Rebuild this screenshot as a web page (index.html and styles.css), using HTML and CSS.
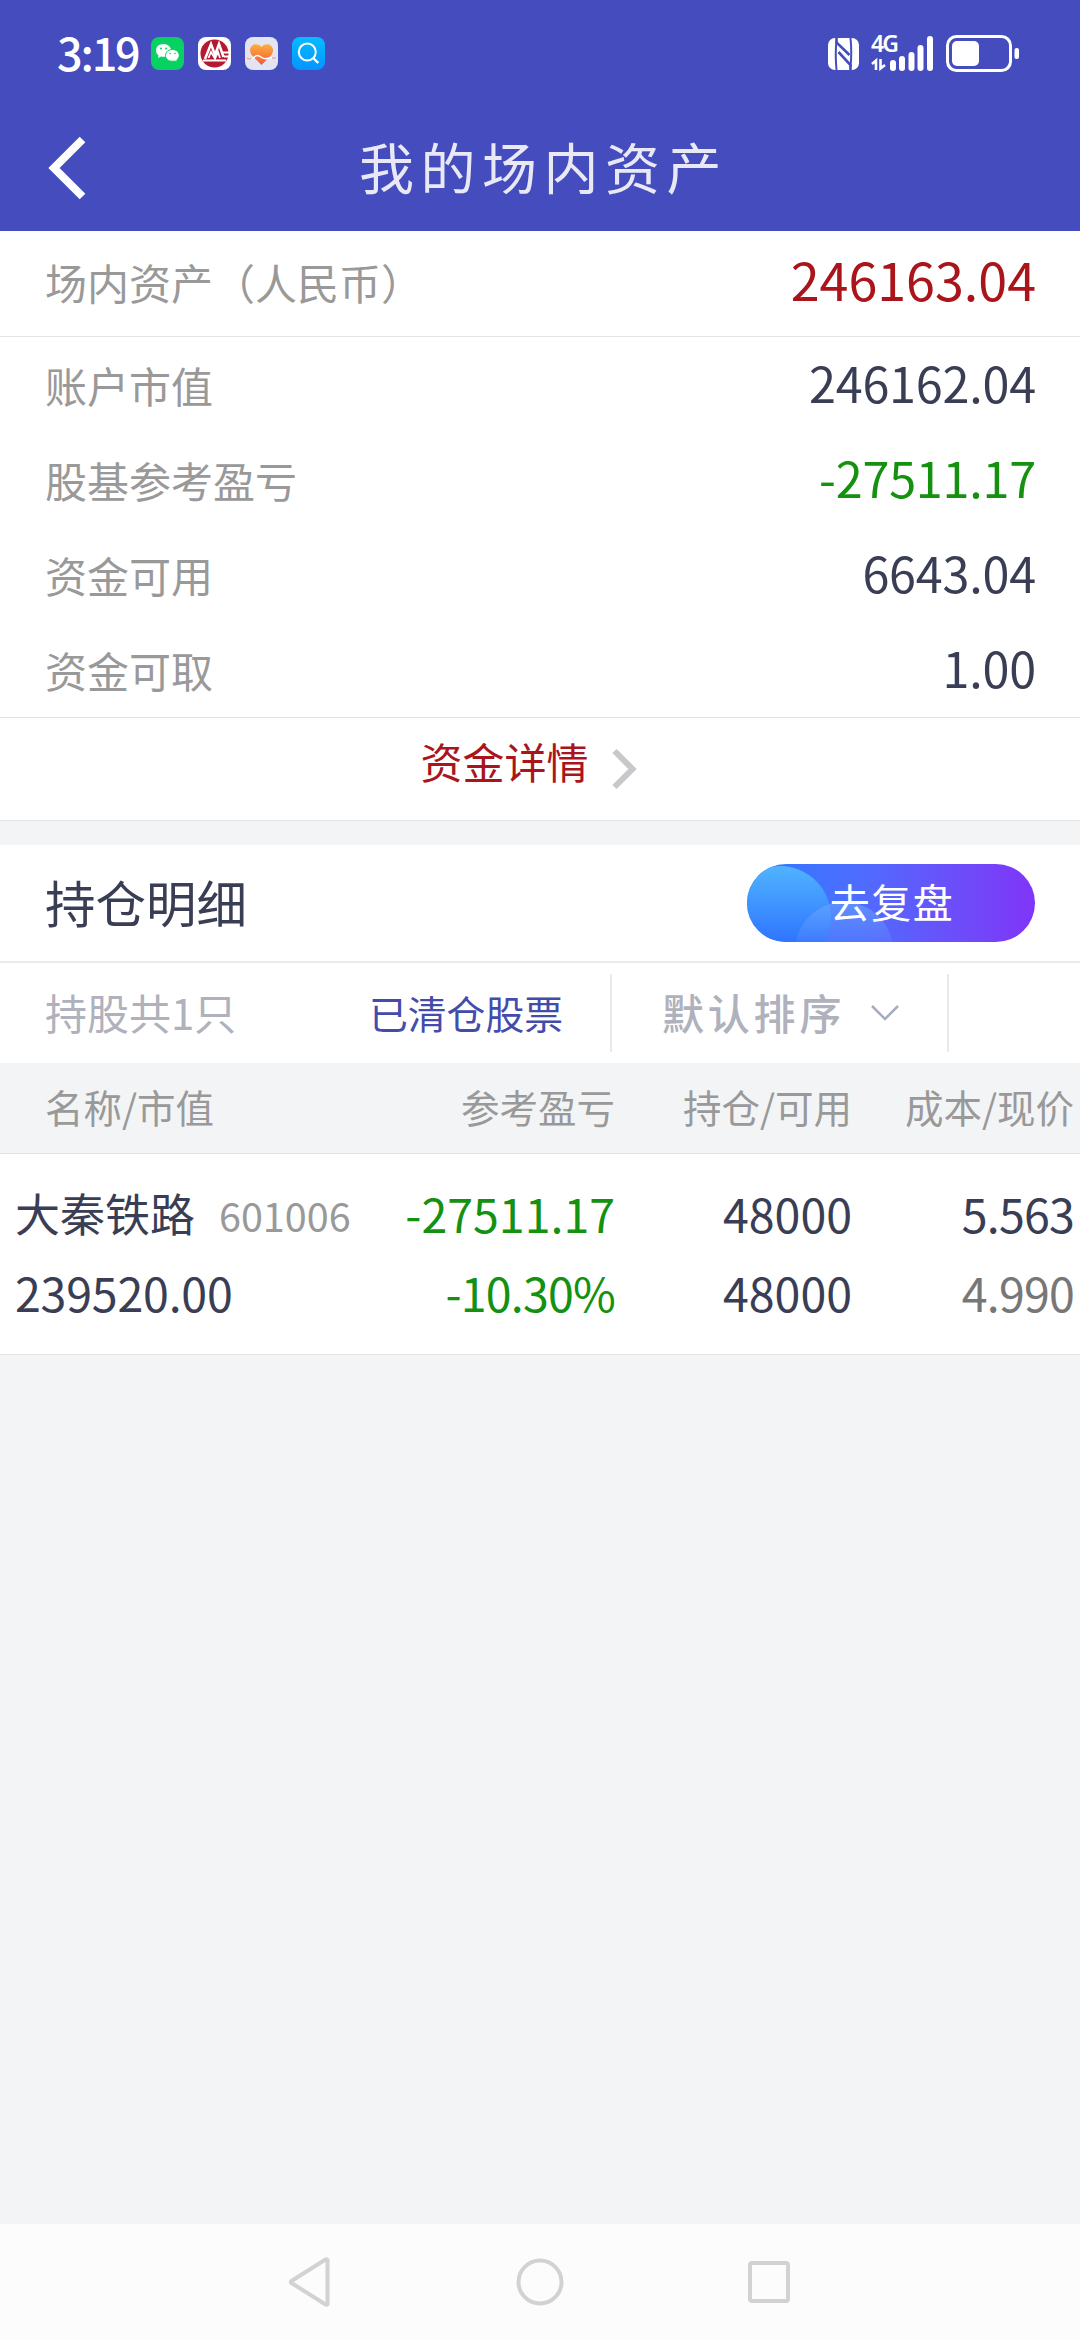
FILE: index.html
```html
<!DOCTYPE html>
<html lang="zh-CN">
<head>
    <meta charset="UTF-8">
    <meta name="viewport" content="width=device-width, initial-scale=1.0">
    <title>我的场内资产</title>
    <link rel="stylesheet" href="styles.css">
</head>
<body>
    <header>
        <!-- Status bar -->
        <div class="status-bar">
            <span class="time">3:19</span>
            <div class="apps">
                <svg width="33" height="33" viewBox="0 0 33 33">
                    <rect width="33" height="33" rx="8" fill="#07d160"/>
                    <path d="M12.500 7C8 7 5 9.800 5 13.500c0 2 1 3.700 2.600 4.900L7 21l3-1.500c.8.2 1.600.3 2.500.3C17 19.800 20 17 20 13.500S17 7 12.500 7z" fill="#fff"/>
                    <path d="M21.500 12.500c-4 0-7 2.600-7 5.900s3 5.900 7 5.900c.8 0 1.500-.1 2.200-.3l2.600 1.300-.6-2.300c1.500-1.100 2.500-2.700 2.500-4.600 0-3.300-2.900-5.900-6.700-5.900z" fill="#fff" stroke="#07d160"/>
                    <g fill="#07d160"><circle cx="10" cy="11.500" r="1"/><circle cx="15" cy="11.500" r="1"/><circle cx="19" cy="16.500" r=".8"/><circle cx="24" cy="16.500" r=".8"/></g>
                </svg>
                <svg width="33" height="33" viewBox="0 0 33 33">
                    <rect width="33" height="33" rx="8" fill="#fff"/>
                    <circle cx="16.500" cy="16.500" r="14" fill="#b5182f"/>
                    <path d="M7 22L13 7l4 11 4-11 4.500 13" fill="none" stroke="#fff" stroke-width="2.500"/>
                    <path d="M10.500 21l2.500-6 4 6.500 3-6.500 2 6M5 23.500h23M25 15.500h8M26 19.500h7" fill="none" stroke="#fff" stroke-width="1.800"/>
                </svg>
                <svg width="33" height="33" viewBox="0 0 33 33">
                    <defs>
                        <linearGradient id="heart" x1="0" y1="0" x2="0" y2="1">
                            <stop offset="0" stop-color="#fbb03c"/>
                            <stop offset="1" stop-color="#f8573c"/>
                        </linearGradient>
                    </defs>
                    <rect width="33" height="33" rx="8" fill="#e2e4f2"/>
                    <path d="M16.500 28L7.500 19C4 15 4.500 11 7 8.700c3-2.500 7-1.700 9.500 1.300 2.500-3 6.500-3.800 9.500-1.300 2.500 2.300 3 6.300-.5 10.300z" fill="url(#heart)"/>
                    <path d="M2 21c4 3 6 0 8-1.500s3-1.500 5 0 4 3 7 2 5-1 9-.5" fill="none" stroke="#fff" stroke-width="1.500"/>
                    <path d="M2 21c1.500 1.200 3 1.300 4.500.3M27 21l4 .1" fill="none" stroke="#f8a07c" stroke-width="1.500"/>
                </svg>
                <svg width="33" height="33" viewBox="0 0 33 33">
                    <defs>
                        <linearGradient id="find" x1="0" y1="0" x2="0" y2="1">
                            <stop offset="0" stop-color="#06bcff"/>
                            <stop offset="1" stop-color="#0594ff"/>
                        </linearGradient>
                    </defs>
                    <rect width="33" height="33" rx="8" fill="url(#find)"/>
                    <circle cx="15.300" cy="15" r="8.500" fill="none" stroke="#fff" stroke-width="2"/>
                    <path d="M21.300 21l5 5" stroke="#fff" stroke-width="2.400"/>
                </svg>
            </div>
            <div class="system">
                <svg width="31" height="32" viewBox="0 0 31 32">
                    <rect width="31" height="32" rx="7" fill="#fff"/>
                    <path d="M8.500 0v4.500L21.500 17M22.500 32v-5L10.500 14" fill="none" stroke="#444cbe" stroke-width="2.600"/>
                    <path d="M8.500 3q-1.500 12 0 29M22.500 0q1.500 14 0 29" fill="none" stroke="#444cbe" stroke-width="2"/>
                </svg>
                <div class="signal">
                    <span class="net">4G</span>
                    <svg width="63" height="35" viewBox="0 0 63 35">
                        <g fill="#fff">
                            <rect x="19" y="24" width="6" height="11" rx="3"/>
                            <rect x="28" y="20" width="6" height="15" rx="3"/>
                            <rect x="37.500" y="16" width="6" height="19" rx="3"/>
                            <rect x="46.500" y="9" width="6" height="26" rx="3"/>
                            <rect x="56" y="0" width="6" height="35" rx="3"/>
                        </g>
                        <path d="M1 28l4-3.500V34M9.500 23v9.500l4.500-3.500" fill="none" stroke="#fff" stroke-width="2.600"/>
                    </svg>
                </div>
                <svg width="74" height="38" viewBox="0 0 74 38">
                    <rect x="1.500" y="1.500" width="63" height="34" rx="9" fill="none" stroke="#fff" stroke-width="3"/>
                    <rect x="6" y="6" width="27" height="25" rx="5" fill="#fff"/>
                    <rect x="68.500" y="13" width="4.500" height="11" rx="2" fill="#fff"/>
                </svg>
            </div>
        </div>

        <!-- Title -->
        <div class="title-bar">
            <svg class="back" width="40" height="64" viewBox="0 0 40 64">
                <path d="M34.500 3.500L6 32l28.500 28.500" fill="none" stroke="#fff" stroke-width="8"/>
            </svg>
            <h1>我的场内资产</h1>
        </div>
    </header>

    <!-- Assets -->
    <section class="assets">
        <div class="total">
            <span class="label">场内资产（人民币）</span>
            <span class="value">246163.04</span>
        </div>
        <div class="rows">
            <div class="row"><span class="label">账户市值</span><span class="value">246162.04</span></div>
            <div class="row"><span class="label">股基参考盈亏</span><span class="value green">-27511.17</span></div>
            <div class="row"><span class="label">资金可用</span><span class="value">6643.04</span></div>
            <div class="row"><span class="label">资金可取</span><span class="value">1.00</span></div>
        </div>
        <div class="detail">
            <span>资金详情</span>
            <svg width="26" height="42" viewBox="0 0 26 42">
                <path d="M3.500 3l18 18-18 18" fill="none" stroke="#c8c8cc" stroke-width="6"/>
            </svg>
        </div>
    </section>

    <!-- Holdings -->
    <section class="holdings">
        <div class="heading">
            <h2>持仓明细</h2>
            <button><span>去复盘</span></button>
        </div>
        <div class="filter">
            <span class="count">持股共1只</span>
            <span class="cleared">已清仓股票</span>
            <div class="sort">
                <span>默认排序</span>
                <svg width="30" height="18" viewBox="0 0 30 18">
                    <path d="M2 2l13 13L28 2" fill="none" stroke="#a3adbf" stroke-width="2.500"/>
                </svg>
            </div>
        </div>
        <div class="grid head">
            <span>名称/市值</span>
            <span>参考盈亏</span>
            <span>持仓/可用</span>
            <span>成本/现价</span>
        </div>
        <div class="grid stock">
            <div>大秦铁路<small>601006</small></div>
            <div class="green">-27511.17</div>
            <div>48000</div>
            <div class="cost">5.563</div>
            <div class="worth">239520.00</div>
            <div class="green rate">-10.30%</div>
            <div>48000</div>
            <div class="cost price">4.990</div>
        </div>
    </section>

    <!-- Navigation keys -->
    <nav>
        <svg width="48" height="52" viewBox="0 0 48 52">
            <path d="M40.500 4v44q-1 1-2 .5L4.500 27q-1.500-1 0-2L38.500 3.500q1-.5 2 .5z"/>
        </svg>
        <svg width="48" height="52" viewBox="0 0 48 52">
            <circle cx="24" cy="26" r="21.500"/>
        </svg>
        <svg width="48" height="52" viewBox="0 0 48 52">
            <rect x="5" y="7" width="38" height="38" rx="2"/>
        </svg>
    </nav>
</body>
</html>
```
FILE: styles.css
```css
* {
    box-sizing: border-box;
}
body {
    margin: 0;
    min-height: 2340px;
    display: flex;
    flex-direction: column;
    background: #f3f4f6;
    color: #393e55;
    font-family: "Noto Sans CJK SC", sans-serif;
    font-size: 42px;
    line-height: 1;
}
svg {
    display: block;
    flex: none;
}
h1, h2 {
    margin: 0;
    font-weight: 400;
}
header {
    height: 231px;
    background: #444cbe;
    color: white;
}
.status-bar {
    height: 107px;
    padding: 0 60px 0 57px;
    display: flex;
    align-items: center;
}
.time {
    width: 94px;
    padding-bottom: 5px;
    font-size: 45px;
    font-weight: 500;
    letter-spacing: -2.200px;
}
.apps {
    display: flex;
    gap: 14px;
}
.system {
    margin-left: auto;
    display: flex;
    align-items: center;
    gap: 12px;
}
.signal {
    position: relative;
}
/* sits above the short signal bars */
.net {
    position: absolute;
    left: 0;
    top: -4px;
    font-family: "Noto Sans", sans-serif;
    font-size: 23px;
    font-weight: 600;
    letter-spacing: -2px;
}
.title-bar {
    height: 124px;
    padding: 0 45px 0 48px;
    display: grid;
    grid-template-columns: 40px 1fr 40px;
    align-items: center;
}
.back {
    margin-top: -2px;
}
h1 {
    padding: 0 0 7px 4px;
    color: #e9e9f6;
    font-size: 55px;
    letter-spacing: 6.500px;
    text-align: center;
}
.assets {
    background: white;
    border-bottom: 1px solid #e2e3e5;
}
.total, .row {
    padding: 0 44px 0 45px;
    display: flex;
    justify-content: space-between;
    align-items: center;
}
.total {
    height: 106px;
    border-bottom: 1px solid #e4e4e4;
}
.label {
    color: #999;
}
.total .label {
    padding-bottom: 4px;
}
.total .value {
    padding-bottom: 10px;
    color: #a9151b;
    font-size: 52px;
}
.row {
    height: 95px;
}
.row .value {
    padding-bottom: 4px;
    font-size: 48.500px;
    letter-spacing: -0.200px;
}
.value.green, .green {
    color: #13910f;
}
.detail {
    height: 103px;
    padding: 0 25px 17px 0;
    border-top: 1px solid #e2e2e2;
    display: flex;
    justify-content: center;
    align-items: center;
    gap: 22px;
    color: #a9151b;
}
.detail span {
    padding-left: 2px;
}
.detail svg {
    margin-top: 17px;
}
.holdings {
    margin-top: 24px;
    background: white;
}
.heading {
    height: 118px;
    padding: 0 45px;
    border-bottom: 2px solid #e8ecec;
    display: flex;
    justify-content: space-between;
    align-items: center;
}
h2 {
    padding-bottom: 4px;
    font-size: 50.500px;
}
button {
    position: relative;
    overflow: hidden;
    width: 288px;
    height: 78px;
    padding: 0 0 5px 2px;
    border: none;
    border-radius: 39px;
    background: linear-gradient(90deg, #2d7bff, #4f6cff 40%, #6a50fa 70%, #8035f8);
    color: white;
    font-family: inherit;
    font-size: 40px;
    letter-spacing: 1.500px;
}
button span {
    position: relative;
    z-index: 1;
}
/* bubbles on the button */
button::before, button::after {
    content: "";
    position: absolute;
    border-radius: 50%;
}
button::before {
    left: -18px;
    top: 2px;
    width: 102px;
    height: 102px;
    background: linear-gradient(#50b4ff, #2f74ff 75%);
}
button::after {
    left: 48px;
    top: 38px;
    width: 98px;
    height: 98px;
    background: linear-gradient(rgba(110, 170, 255, 0.55), rgba(90, 130, 255, 0.25) 45%);
}
.filter {
    height: 100px;
    padding-left: 45px;
    display: flex;
    align-items: center;
    color: #afb1bc;
}
.count {
    width: 324px;
    padding-bottom: 3px;
}
.cleared {
    width: 241px;
    padding-bottom: 2px;
    color: #444cab;
    font-size: 38.800px;
}
.sort {
    width: 339px;
    height: 78px;
    padding-left: 50px;
    border: solid #e5ebee;
    border-width: 0 2px;
    display: flex;
    align-items: center;
    gap: 25px;
    font-weight: 500;
    letter-spacing: 3.800px;
}
.sort span {
    padding-bottom: 3px;
}
.grid {
    padding: 0 6px 0 15px;
    display: grid;
    grid-template-columns: 366px 234px 237px 222px;
    text-align: right;
}
.grid > :nth-child(4n + 1) {
    text-align: left;
}
.head {
    height: 91px;
    background: #f3f4f6;
    border-bottom: 1px solid #e2e3e5;
    color: #999;
    font-size: 38.500px;
    line-height: 86px;
}
.head :first-child {
    padding-left: 30px;
}
.stock {
    height: 201px;
    padding-top: 19px;
    border-bottom: 1px solid #e2e3e5;
    font-size: 46.500px;
    grid-auto-rows: 79px;
    line-height: 79px;
    white-space: nowrap;
}
.stock :first-child {
    font-size: 45px;
}
.stock :first-child small {
    margin-left: 24px;
    color: #999;
    font-size: 39.500px;
}
.worth {
    letter-spacing: -0.200px;
}
.cost, .rate {
    letter-spacing: -0.800px;
}
.price {
    color: #777;
}
nav {
    height: 116px;
    margin-top: auto;
    padding: 0 287px;
    background: #fcfcfc;
    display: flex;
    justify-content: space-between;
    align-items: center;
}
nav svg {
    fill: none;
    stroke: #d2d2d2;
    stroke-width: 4;
}
```
